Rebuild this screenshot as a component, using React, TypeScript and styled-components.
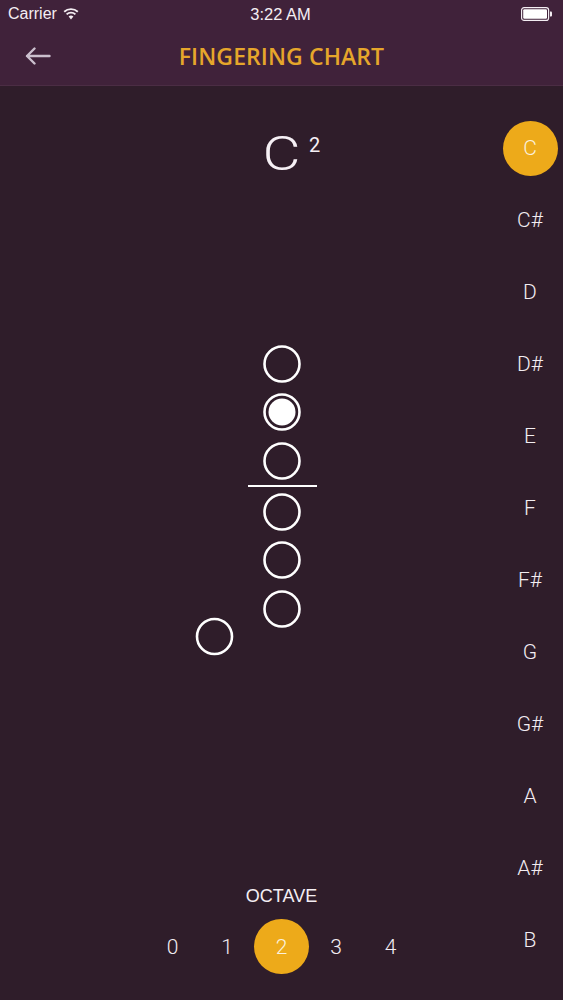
import React, { useState } from "react";
import styled, { createGlobalStyle } from "styled-components";

const Global = createGlobalStyle`
  html, body { margin: 0; padding: 0; background: #2f1d2a; }
  body { font-family: Roboto, "Liberation Sans", Arial, sans-serif; -webkit-font-smoothing: antialiased; }
  * { box-sizing: border-box; }
`;

const Screen = styled.div`
  width: 563px;
  height: 1000px;
  display: flex;
  flex-direction: column;
  background: #2f1d2a;
  overflow: hidden;
`;

const Header = styled.div`
  background: #40223a;
  border-bottom: 1px solid #4b2d44;
  display: flex;
  flex-direction: column;
`;

const StatusBar = styled.div`
  height: 28px;
  padding: 0 10px 0 8px;
  display: grid;
  grid-template-columns: 1fr auto 1fr;
  align-items: center;
  color: #f4eef3;
  font-family: "Liberation Sans", Arial, sans-serif;
  font-size: 16px;
`;

const Carrier = styled.div`
  display: flex;
  align-items: center;
  gap: 6px;
`;

const Time = styled.div`
  font-size: 16.5px;
`;

const BatteryWrap = styled.div`
  justify-self: end;
  display: flex;
  align-items: center;
`;

const NavBar = styled.div`
  height: 57px;
  display: grid;
  grid-template-columns: 70px 1fr 70px;
  align-items: center;
  padding-bottom: 1px;
`;

const BackButton = styled.button`
  background: none;
  border: none;
  padding: 0 0 0 25px;
  height: 100%;
  display: flex;
  align-items: center;
  cursor: pointer;
`;

const NavTitle = styled.h1`
  margin: 0;
  text-align: center;
  font-family: "Open Sans", "Liberation Sans", sans-serif;
  font-weight: 600;
  font-size: 23px;
  color: #e6a62b;
  letter-spacing: 0.1px;
`;

const Body = styled.div`
  flex: 1;
  display: grid;
  grid-template-columns: 66px 1fr 66px;
`;

const Center = styled.div`
  display: flex;
  flex-direction: column;
  align-items: center;
  padding-top: 44px;
  padding-bottom: 26px;
`;

const NoteTitle = styled.div`
  position: relative;
  color: #f6f0f5;
  font-family: Roboto, "Liberation Sans", sans-serif;
  font-weight: 300;
  font-size: 48px;
  line-height: 48px;
  height: 48px;
`;

const NoteLetter = styled.span`
  display: inline-block;
  transform: scaleX(1.22);
`;

const Sup = styled.span`
  position: absolute;
  left: calc(100% + 12px);
  top: 5px;
  font-size: 20px;
  line-height: 20px;
  font-weight: 400;
`;

const Diagram = styled.svg`
  margin-top: 162px;
  display: block;
`;

const OctaveSection = styled.div`
  margin-top: auto;
  display: flex;
  flex-direction: column;
  align-items: center;
  gap: 13px;
`;

const OctaveLabel = styled.div`
  color: #f4eef3;
  font-family: "Liberation Sans", Arial, sans-serif;
  font-size: 18px;
  line-height: 20px;
`;

const OctaveRow = styled.div`
  display: flex;
  align-items: center;
`;

const Pill = styled.button<{ $active: boolean; $size: number }>`
  width: ${(p) => p.$size}px;
  height: ${(p) => p.$size}px;
  border-radius: 50%;
  border: none;
  padding: 0;
  background: ${(p) => (p.$active ? "#edaa1a" : "transparent")};
  color: ${(p) => (p.$active ? "#fbf1dd" : "#f3edf2")};
  font-family: Roboto, "Liberation Sans", sans-serif;
  font-weight: 300;
  font-size: 21px;
  display: flex;
  align-items: center;
  justify-content: center;
  cursor: pointer;
`;

const OctaveCell = styled.div`
  width: 54.5px;
  display: flex;
  justify-content: center;
`;

const NoteColumn = styled.div`
  display: flex;
  flex-direction: column;
  padding-top: 26px;
`;

const NoteCell = styled.div`
  height: 72px;
  display: flex;
  align-items: center;
  justify-content: center;
`;

const NOTES = ["C", "C#", "D", "D#", "E", "F", "F#", "G", "G#", "A", "A#", "B"];
const OCTAVES = [0, 1, 2, 3, 4];

// fingering for C2: second hole closed
const HOLES = [24, 72, 121, 172, 220, 269];
const CLOSED = [false, true, false, false, false, false];

const Wifi = () => (
  <svg width="16" height="12" viewBox="0 0 16 12">
    <path d="M8 11.5 L5.6 8.6 A3.6 3.6 0 0 1 10.4 8.6 Z" fill="#f4eef3" />
    <path d="M3.6 6.4 A6.4 6.4 0 0 1 12.4 6.4" stroke="#f4eef3" strokeWidth="1.9" fill="none" />
    <path d="M1.2 3.8 A10 10 0 0 1 14.8 3.8" stroke="#f4eef3" strokeWidth="1.9" fill="none" />
  </svg>
);

const Battery = () => (
  <svg width="32" height="14" viewBox="0 0 32 14">
    <rect x="0.6" y="0.6" width="27" height="12.8" rx="2.5" fill="none" stroke="#f4eef3" strokeWidth="1.2" />
    <rect x="2.2" y="2.2" width="23.8" height="9.6" rx="1.2" fill="#ffffff" />
    <path d="M29 4.5 h1 a1 1 0 0 1 1 1 v3 a1 1 0 0 1 -1 1 h-1 z" fill="#f4eef3" />
  </svg>
);

const BackArrow = () => (
  <svg width="26" height="18" viewBox="0 0 26 18">
    <path d="M24.5 9 H2 M9.5 1.5 L2 9 L9.5 16.5" stroke="#cbbfcd" strokeWidth="2.4" fill="none" strokeLinecap="round" strokeLinejoin="round" />
  </svg>
);

export default function App() {
  const [note, setNote] = useState("C");
  const [octave, setOctave] = useState(2);

  return (
    <>
      <Global />
      <Screen>
        <Header>
          <StatusBar>
            <Carrier>
              Carrier <Wifi />
            </Carrier>
            <Time>3:22 AM</Time>
            <BatteryWrap>
              <Battery />
            </BatteryWrap>
          </StatusBar>
          <NavBar>
            <BackButton aria-label="Back">
              <BackArrow />
            </BackButton>
            <NavTitle>FINGERING CHART</NavTitle>
            <div />
          </NavBar>
        </Header>
        <Body>
          <div />
          <Center>
            <NoteTitle>
              <NoteLetter>{note}</NoteLetter>
              <Sup>{octave}</Sup>
            </NoteTitle>
            <Diagram width="180" height="320" viewBox="0 0 180 320">
              {HOLES.map((cy, i) => (
                <g key={i}>
                  <circle cx="90" cy={cy} r="17.5" fill="none" stroke="#ffffff" strokeWidth="2.6" />
                  {CLOSED[i] && <circle cx="90" cy={cy} r="13.5" fill="#ffffff" />}
                </g>
              ))}
              <line x1="56" y1="146" x2="125" y2="146" stroke="#ffffff" strokeWidth="2" />
              <circle cx="22.5" cy="296.5" r="17.5" fill="none" stroke="#ffffff" strokeWidth="2.6" />
            </Diagram>
            <OctaveSection>
              <OctaveLabel>OCTAVE</OctaveLabel>
              <OctaveRow>
                {OCTAVES.map((o) => (
                  <OctaveCell key={o}>
                    <Pill $active={o === octave} $size={55} onClick={() => setOctave(o)}>
                      {o}
                    </Pill>
                  </OctaveCell>
                ))}
              </OctaveRow>
            </OctaveSection>
          </Center>
          <NoteColumn>
            {NOTES.map((n) => (
              <NoteCell key={n}>
                <Pill $active={n === note} $size={55} onClick={() => setNote(n)}>
                  {n}
                </Pill>
              </NoteCell>
            ))}
          </NoteColumn>
        </Body>
      </Screen>
    </>
  );
}
